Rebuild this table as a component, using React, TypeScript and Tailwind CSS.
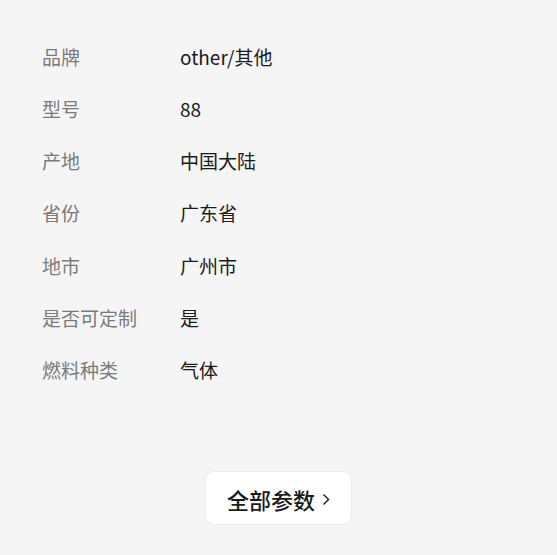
import React from "react";

const rows: [string, string][] = [
  ["品牌", "other/其他"],
  ["型号", "88"],
  ["产地", "中国大陆"],
  ["省份", "广东省"],
  ["地市", "广州市"],
  ["是否可定制", "是"],
  ["燃料种类", "气体"],
];

export default function App() {
  return (
    <div
      className="w-[557px] h-[555px] bg-[#f5f5f5] flex flex-col"
      style={{ fontFamily: '"Noto Sans CJK SC", "Noto Sans", sans-serif' }}
    >
      <div className="pt-[31px] pl-[42px] flex flex-col">
        {rows.map(([k, v]) => (
          <div key={k} className="flex items-center h-[52.2px] text-[19px]">
            <div className="w-[138px] text-[#7a7a7a]">{k}</div>
            <div className="text-[#1a1a1a]">{v}</div>
          </div>
        ))}
      </div>
      <div className="flex justify-center mt-[75px]">
        <div className="w-[147px] h-[54px] bg-white rounded-[9px] border border-[#ebebeb] flex items-center justify-center gap-[7px] text-[22px] font-medium text-[#1a1a1a] pt-[2px]">
          <span>全部参数</span>
          <svg width="8" height="13" viewBox="0 0 8 13" fill="none" className="mt-[1px]">
            <path d="M1.5 1.5 L6.5 6.5 L1.5 11.5" stroke="#1a1a1a" strokeWidth="1.4" />
          </svg>
        </div>
      </div>
    </div>
  );
}
